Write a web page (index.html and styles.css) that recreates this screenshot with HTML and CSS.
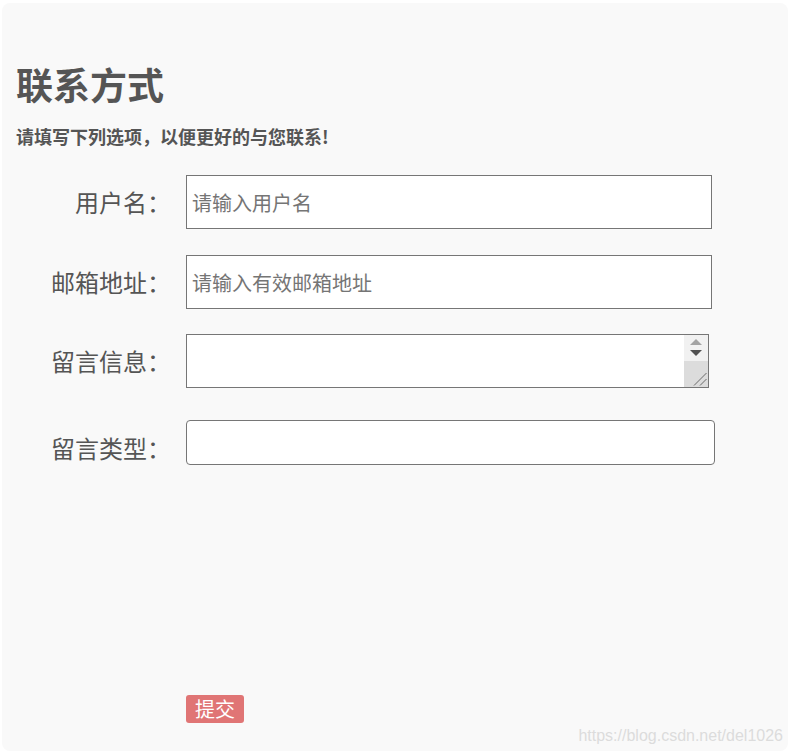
FILE: index.html
```html
<!DOCTYPE html>
<html lang="zh-CN">
<head>
<meta charset="utf-8">
<title>联系方式</title>
<link rel="stylesheet" href="styles.css">
</head>
<body>
<div class="card">
  <h1 class="title">联系方式</h1>
  <p class="subtitle">请填写下列选项，以便更好的与您联系!</p>
  <form class="form">
    <div class="row row-1">
      <label class="label">用户名：</label>
      <input class="field field-input" type="text" placeholder="请输入用户名">
    </div>
    <div class="row row-2">
      <label class="label">邮箱地址：</label>
      <input class="field field-input" type="text" placeholder="请输入有效邮箱地址">
    </div>
    <div class="row row-3">
      <label class="label">留言信息：</label>
      <div class="area-wrap">
        <textarea class="field field-area"></textarea>
        <svg class="fake-scroll" width="24" height="52" viewBox="0 0 24 52">
          <rect x="0" y="0" width="24" height="26" fill="#f1f1f1"/>
          <polygon points="6,10 12,4 18,10" fill="#a3a3a3"/>
          <polygon points="6,15 18,15 12,21" fill="#505050"/>
          <rect x="0" y="26" width="24" height="26" fill="#dcdcdc"/>
          <line x1="10" y1="50.5" x2="22.5" y2="38" stroke="#6a6a6a" stroke-width="1"/>
          <line x1="16" y1="50.5" x2="22.5" y2="44" stroke="#6a6a6a" stroke-width="1"/>
        </svg>
      </div>
    </div>
    <div class="row row-4">
      <label class="label label-low">留言类型：</label>
      <select class="field field-select"></select>
    </div>
    <div class="actions">
      <button class="submit" type="button">提交</button>
    </div>
  </form>
  <div class="watermark">https://blog.csdn.net/del1026</div>
</div>
</body>
</html>
```

FILE: styles.css
```css
* {
  box-sizing: border-box;
}

html, body {
  margin: 0;
  background: #ffffff;
}

body {
  padding: 3px 3px 4px 2px;
  font-family: "Noto Sans CJK SC", "Noto Sans", sans-serif;
  color: #555555;
}

.card {
  position: relative;
  height: 748px;
  background: #f9f9f9;
  border-radius: 8px;
  padding: 0 14px;
  overflow: hidden;
}

.title {
  margin: 63px 0 0;
  font-size: 37px;
  line-height: 37px;
  font-weight: 700;
  color: #555555;
}

.subtitle {
  margin: 24px 0 0;
  font-size: 18px;
  line-height: 18px;
  font-weight: 700;
  color: #555555;
}

.form {
  margin-top: 30px;
}

.row {
  display: flex;
  align-items: center;
}

.row-1 { margin-bottom: 26px; }
.row-2 { margin-bottom: 25px; }
.row-3 { margin-bottom: 32px; }

.label {
  width: 155px;
  margin-right: 15px;
  text-align: right;
  font-size: 24px;
  line-height: 24px;
  color: #555555;
  flex: none;
}

.label-low {
  padding-top: 11px;
}

.field {
  font-family: "Noto Sans CJK SC", "Noto Sans", sans-serif;
  border: 1px solid #767676;
  background: #ffffff;
  margin: 0;
  flex: none;
}

.field-input {
  width: 526px;
  height: 54px;
  padding: 0 5px;
  font-size: 20px;
  border-radius: 0;
  outline: none;
}

.field-input::placeholder {
  color: #757575;
}

.area-wrap {
  position: relative;
  width: 523px;
  height: 54px;
  flex: none;
}

.field-area {
  display: block;
  width: 523px;
  height: 54px;
  resize: none;
  overflow: hidden;
  border-radius: 0;
  outline: none;
}

.fake-scroll {
  position: absolute;
  top: 1px;
  right: 1px;
  display: block;
}

.field-select {
  width: 529px;
  height: 45px;
  border-radius: 4px;
  -webkit-appearance: none;
  appearance: none;
  outline: none;
}

.actions {
  margin-top: 230px;
  padding-left: 170px;
}

.submit {
  display: block;
  height: 28px;
  padding: 0 9px;
  border: none;
  border-radius: 3px;
  background: #e07575;
  color: #ffffff;
  font-family: "Noto Sans CJK SC", "Noto Sans", sans-serif;
  font-size: 20px;
  line-height: 28px;
}

.watermark {
  position: absolute;
  right: 5px;
  bottom: 7px;
  font-family: "Liberation Sans", Arial, sans-serif;
  font-size: 16px;
  line-height: 16px;
  color: #dcdcdc;
}
```
